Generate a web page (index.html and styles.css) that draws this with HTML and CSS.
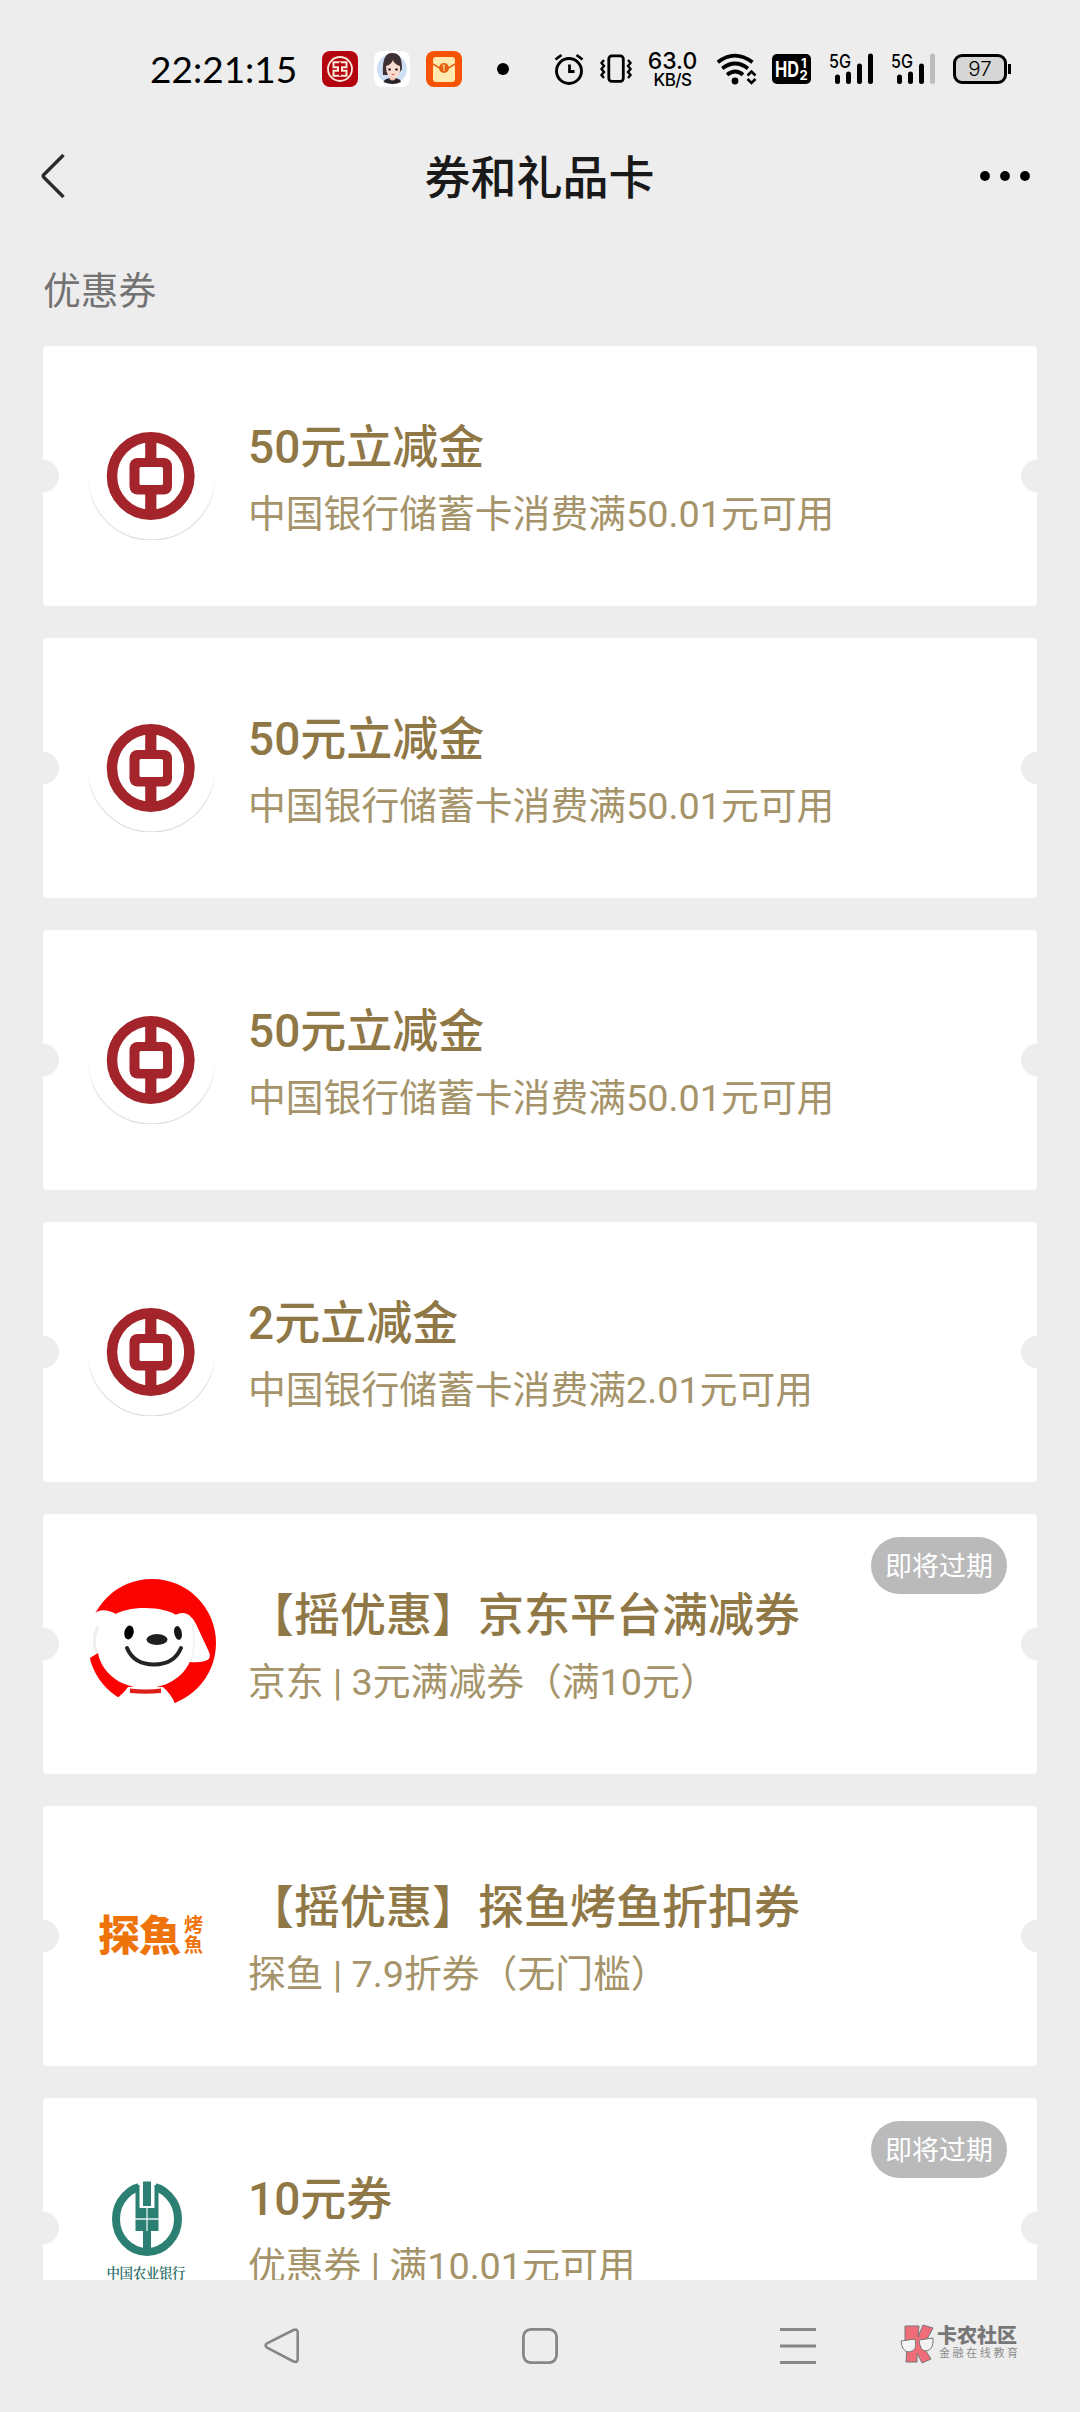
FILE: index.html
```html
<!DOCTYPE html>
<html lang="zh-CN">
<head>
<meta charset="utf-8">
<title>券和礼品卡</title>
<link rel="stylesheet" href="styles.css">
</head>
<body>
<svg class="defs" width="0" height="0">
  <linearGradient id="rim" x1="0" y1="0" x2="0" y2="1"><stop offset="0" stop-color="#fff"/><stop offset="0.500" stop-color="#e4e4e4"/><stop offset="1" stop-color="#d8d8d8"/></linearGradient>
  <symbol id="boc" viewBox="0 0 128 128">
    <path d="M0.500 66a63 62 0 0 0 126 0" fill="none" stroke="url(#rim)" stroke-width="1.200"/>
    <circle cx="62.700" cy="64" r="38.700" fill="none" stroke="#a3242a" stroke-width="10.500"/>
    <path d="M57.200 26h11.200v22H57.200zM57.200 80h11.200v22H57.200z" fill="#a3242a"/>
    <rect x="41.500" y="46" width="42.500" height="36.500" rx="8" fill="#a3242a"/>
    <rect x="51.500" y="55" width="23.500" height="18" rx="1.500" fill="#fff"/>
  </symbol>
</svg>
<div class="screen">
  <div class="status">
    <span class="time">22:21:15</span>
    <svg class="app" viewBox="0 0 36 36"><rect width="36" height="36" rx="8" fill="#b4040f"/><circle cx="18" cy="18" r="12" fill="none" stroke="#fbe9dc" stroke-width="1.800"/><path d="M11.500 11.200h13v5h-4.500v3.600h4.500v5h-13v-5H16v-3.600h-4.500z" fill="none" stroke="#fbe9dc" stroke-width="2"/><path d="M18 11v14" stroke="#b4040f" stroke-width="1.600"/></svg>
    <svg class="app" viewBox="0 0 36 36"><rect width="36" height="36" rx="8" fill="#fff"/><circle cx="18" cy="18" r="15" fill="#cfe0f6"/><path d="M9 24C8 9 11 2 18 2s10 4 10 16l-4 6z" fill="#3f3133"/><path d="M9.500 31q1-4 9-4t8.500 4q-8 4-17.500 0z" fill="#272329"/><path d="M15.500 24h6v4q-3 3-6 0z" fill="#f2c3b3"/><path d="M12 15q5-1 7-6 1 4 7 6 1 12-7 12-7-1-7-12z" fill="#fbdcd0"/><circle cx="15.500" cy="18.500" r="1.300" fill="#302529"/><circle cx="22.500" cy="18.500" r="1.300" fill="#302529"/><path d="M17.500 23.500h3" stroke="#cf6663" stroke-width="1.200"/></svg>
    <svg class="app" viewBox="0 0 36 36"><rect width="36" height="36" rx="8" fill="#f65305"/><rect x="7" y="6" width="22" height="25" rx="3" fill="#ffe9ae"/><path d="M7 13l8 5M29 13l-8 5" stroke="#e0681c" stroke-width="1.500"/><circle cx="18" cy="17" r="5" fill="#df6213"/><path d="M16.500 15l1.500-1v6" fill="none" stroke="#ffd48c" stroke-width="1.200"/></svg>
    <i class="more-dot"></i>
    <svg class="alarm" viewBox="0 0 30 32"><g fill="none" stroke="#000"><circle cx="15" cy="18" r="12.500" stroke-width="2.900"/><path d="M1.500 6.500l6-4.500M28.500 6.500l-6-4.500" stroke-width="2.800"/><path d="M15.500 11.500v7h5" stroke-width="2.800"/></g></svg>
    <svg class="vib" viewBox="0 0 32 30"><g fill="none" stroke="#000" stroke-width="2.800"><rect x="8.800" y="1.800" width="14.500" height="25.500" rx="3"/><path d="M4 6L1.500 9 4 12 1.500 15 4 18 1.500 21 4 24M28 6l2.500 3-2.500 3 2.500 3-2.500 3 2.500 3-2.500 3" stroke-width="2.400"/></g></svg>
    <span class="speed"><b>63.0</b><small>KB/S</small></span>
    <svg class="wifi" viewBox="0 0 42 32"><g fill="none" stroke="#000" stroke-width="3.800"><path d="M1.800 9.200Q18.500-4 36.500 9.200"/><path d="M6.300 15.400Q19 5.500 32 15.400"/><path d="M11 21.700q8.500-6.500 16 0"/><path d="M31.500 22.500l4-4 4 4M31.500 26l4 4 4-4" stroke-width="2.600"/></g><circle cx="19" cy="28" r="3.400"/></svg>
    <svg class="hd" viewBox="0 0 39 30"><rect width="39" height="30" rx="5"/><g fill="#fff" font-family="Inter, sans-serif" font-weight="700"><text x="3" y="22.500" font-size="21" textLength="24" lengthAdjust="spacingAndGlyphs">HD</text><text x="29" y="13.500" font-size="13">1</text><text x="27.500" y="26" font-size="13">2</text></g></svg>
    <svg class="signal" viewBox="0 0 46 32"><text x="0" y="14.500" font-family="Inter, sans-serif" font-weight="500" font-size="18.500" textLength="22" lengthAdjust="spacingAndGlyphs">5G</text><g stroke="#000" stroke-width="5" stroke-linecap="round"><path d="M8.500 24v4.500M19.500 21v7.500M30.500 13v15.500M41.500 3v25.500"/></g></svg>
    <svg class="signal second" viewBox="0 0 46 32"><text x="0" y="14.500" font-family="Inter, sans-serif" font-weight="500" font-size="18.500" textLength="22" lengthAdjust="spacingAndGlyphs">5G</text><g stroke="#000" stroke-width="5" stroke-linecap="round"><path d="M8.500 24v4.500M19.500 21v7.500M30.500 13v15.500"/><path d="M41.500 3v25.500" stroke="#bdbdbd"/></g></svg>
    <svg class="battery" viewBox="0 0 58 30"><rect x="1.500" y="1.500" width="51" height="27" rx="7.500" fill="#d6d6d6" stroke="#000" stroke-width="3"/><path d="M56.500 10v10" stroke="#000" stroke-width="3"/><text x="27" y="22" text-anchor="middle" font-family="Inter, sans-serif" font-weight="300" font-size="20" textLength="23.500" lengthAdjust="spacingAndGlyphs">97</text></svg>
  </div>

  <header class="bar">
    <svg class="back" viewBox="0 0 26 46"><path d="M23.500 2L4 21.500q-1.500 1.500 0 3L23.500 44" fill="none" stroke="#2b2b2b" stroke-width="3.400"/></svg>
    <h1>券和礼品卡</h1>
    <svg class="dots" viewBox="0 0 50 12"><circle cx="5" cy="6" r="4.900"/><circle cx="25" cy="6" r="4.900"/><circle cx="45" cy="6" r="4.900"/></svg>
  </header>

  <main class="list">
    <h2>优惠券</h2>
    <article class="card"><svg class="logo"><use href="#boc"/></svg><div class="info"><h3>50元立减金</h3><p>中国银行储蓄卡消费满50.01元可用</p></div></article>
    <article class="card"><svg class="logo"><use href="#boc"/></svg><div class="info"><h3>50元立减金</h3><p>中国银行储蓄卡消费满50.01元可用</p></div></article>
    <article class="card"><svg class="logo"><use href="#boc"/></svg><div class="info"><h3>50元立减金</h3><p>中国银行储蓄卡消费满50.01元可用</p></div></article>
    <article class="card"><svg class="logo"><use href="#boc"/></svg><div class="info"><h3>2元立减金</h3><p>中国银行储蓄卡消费满2.01元可用</p></div></article>
    <article class="card">
      <svg class="logo" viewBox="0 0 128 128">
        <circle cx="64" cy="63" r="64" fill="#fb0300"/>
        <path d="M28 34Q13 26 5 35L-3 40v41l13-8z" fill="#fff"/>
        <path d="M10 46q-7 14-1 27" fill="none" stroke="#eee" stroke-width="3"/>
        <path d="M84 37q10-7 17-2 4 3 7 9l13 28q3 7-4 9-6 2-16 1z" fill="#fff"/>
        <path d="M40 107q-4 6-12 12v11h61l-2-6q-3-9-12-17z" fill="#fff"/>
        <path d="M57 28c27 0 43 11 47 26 7 31-16 54-47 54S5 84 10 58c4-20 20-30 47-30z" fill="#fff"/>
        <path d="M104 45q5 17-1 36" fill="none" stroke="#f1f1f1" stroke-width="1.500"/>
        <path d="M42 108.500q16 2 31 0v4.500q-16 1.500-31 0z" fill="#dc2019"/>
        <ellipse cx="41" cy="52.500" rx="4.600" ry="7" transform="rotate(12 41 52.500)"/><ellipse cx="90" cy="53" rx="3.800" ry="7" transform="rotate(-12 90 53)" fill="#171717"/>
        <ellipse cx="69" cy="59.500" rx="10.500" ry="5.400" fill="#1f1f1f"/>
        <path d="M39 68q7 16.500 27 16.500T93 68" fill="none" stroke="#242424" stroke-width="4" stroke-linecap="round"/>
      </svg>
      <div class="info"><h3>【摇优惠】京东平台满减券</h3><p>京东 | 3元满减券（满10元）</p></div>
      <span class="badge">即将过期</span>
    </article>
    <article class="card">
      <div class="logo fish"><strong>探魚</strong><span>烤<br>魚</span></div>
      <div class="info"><h3>【摇优惠】探鱼烤鱼折扣券</h3><p>探鱼 | 7.9折券（无门槛）</p></div>
    </article>
    <article class="card">
      <svg class="logo" viewBox="0 0 128 128">
        <ellipse cx="59" cy="55" rx="31" ry="33" fill="none" stroke="#2b8073" stroke-width="8"/>
        <path d="M50 15h18v30H50z" fill="#fff"/>
        <path d="M55 17.500h8V42h-8z" fill="#2b8073"/>
        <path d="M47.500 21h4v23h15V21h4v46h-23z" fill="#2b8073"/>
        <path d="M55 67h8v22h-8z" fill="#2b8073"/>
        <path d="M47 55h24M59 43v24" stroke="#e6f2ef" stroke-width="1.300"/>
        <text class="abc-name" x="18.500" y="114" textLength="79" fill="#2b6f68">中国农业银行</text>
      </svg>
      <div class="info"><h3>10元券</h3><p>优惠券 | 满10.01元可用</p></div>
      <span class="badge">即将过期</span>
    </article>
  </main>

  <nav class="nav">
    <svg class="triangle" viewBox="0 0 36 36"><path d="M29.500 2L3.500 15.200q-4 2.300 0 4.600l26 13.700q4.200 1.500 4.200-2.800V4.500Q33.700.5 29.500 2z" fill="none" stroke="#868686" stroke-width="2.600"/></svg>
    <svg viewBox="0 0 36 36"><rect x="1.400" y="1.400" width="33.200" height="33.200" rx="7.500" fill="none" stroke="#868686" stroke-width="2.800"/></svg>
    <svg viewBox="0 0 36 36"><path d="M0 1.500h36M0 18h36M0 34.500h36" stroke="#868686" stroke-width="3"/></svg>
  </nav>

  <div class="mark">
    <svg viewBox="0 0 34 40"><g stroke="#777" stroke-width="1" stroke-linejoin="round"><path d="M5 3h14l-1 11 5-12 10 3-7 13-4 4 9 14-9 4-5-10v9H6l1-15-2-6z" fill="#ef6c79"/><path d="M1 18l14-2q3 12-6 13-7 0-8-11zM19 17l14-2q1 12-7 13-6 0-7-11z" fill="#f3f3f3"/></g></svg>
    <div><b>卡农社区</b><small>金融在线教育</small></div>
  </div>
</div>
</body>
</html>
```
FILE: styles.css
```css
* { box-sizing: border-box; margin: 0; padding: 0; }
body {
  background: #ededed;
  font-family: Roboto, "Noto Sans CJK SC", sans-serif;
}
.defs { display: block; }
svg { flex: none; overflow: visible; }
.screen {
  position: relative;
  display: flex;
  flex-direction: column;
  width: 1080px;
  height: 2412px;
  overflow: hidden;
}

.status { flex: none; display: flex; align-items: center; height: 138px; padding-left: 150px; }
.time { width: 172px; font: 37px/46px Lato, sans-serif; white-space: nowrap; }
.app { width: 36px; height: 36px; margin-right: 16px; }
.more-dot { width: 12px; height: 12px; margin-left: 19px; border-radius: 50%; background: #000; }
.alarm { width: 30px; height: 32px; margin-left: 45px; }
.vib { width: 32px; height: 30px; margin-left: 16px; }
.speed {
  display: flex; flex-direction: column; align-items: center;
  width: 49px; margin-left: 16px;
  font-family: Inter, sans-serif;
}
.speed b { padding-top: 2px; font-size: 23px; line-height: 20px; font-weight: 500; }
.speed small { font-size: 17px; line-height: 18px; font-weight: 500; letter-spacing: -0.500px; }
.wifi { width: 42px; height: 32px; margin-left: 19px; }
.hd { width: 39px; height: 30px; margin-left: 14px; }
.signal { width: 46px; height: 32px; margin-left: 18px; }
.signal.second { margin-left: 16px; }
.battery { width: 58px; height: 30px; margin-left: 16px; }

.bar {
  flex: none; display: flex; align-items: center; justify-content: space-between;
  height: 76px; padding: 0 50px 0 40px;
}
.bar h1 { padding: 4px 0 0 9px; font-size: 46px; line-height: 66px; font-weight: 500; color: #191919; }
.back { width: 26px; height: 46px; margin-right: 24px; }
.dots { width: 50px; height: 12px; }

.list { flex: none; height: 2066px; padding: 0 43px; overflow: hidden; }
.list h2 { height: 132px; padding-top: 48px; font-size: 37.800px; line-height: 58px; font-weight: 400; color: #737373; }
.card {
  position: relative;
  display: flex; align-items: center;
  height: 260px; margin-bottom: 32px; padding-left: 45px;
  border-radius: 4px;
  background:
    radial-gradient(circle at 0 50%, #ededed 15.500px, transparent 16.500px),
    radial-gradient(circle at 100% 50%, #ededed 15.500px, transparent 16.500px),
    #fff;
}
.logo { flex: none; width: 128px; height: 128px; }
.info { margin-left: 32px; padding-top: 8px; white-space: nowrap; }
.info h3 { font-size: 46px; line-height: 68px; font-weight: 500; color: #8f7846; }
.info p { font-size: 37.800px; line-height: 66px; font-weight: 400; color: #a59369; }
.badge {
  position: absolute; top: 23px; right: 30px;
  width: 136px; height: 57px; padding-top: 2px; border-radius: 29px;
  background: #bababa; color: #fff;
  font-size: 27px; line-height: 57px; text-align: center;
}
.fish { display: flex; align-items: center; padding-left: 10px; color: #ee730a; font-weight: 900; }
.fish strong { padding-top: 2px; font-size: 42px; line-height: 44px; font-weight: 900; letter-spacing: -1px; }
.fish span { margin-left: 4px; font-size: 19px; line-height: 20px; font-weight: 700; }
.abc-name { font: 600 13.500px "Noto Serif CJK SC", "Noto Sans CJK SC", serif; }

.nav {
  flex: none; display: grid; grid-template-columns: repeat(3, 258px);
  justify-content: center; align-items: center; justify-items: center;
  height: 132px;
}
.nav svg { width: 36px; height: 36px; }

.mark { position: absolute; left: 900px; top: 2323px; display: flex; align-items: flex-start; gap: 3px; }
.mark svg { width: 34px; height: 40px; }
.mark div { display: flex; flex-direction: column; white-space: nowrap; }
.mark b { padding-top: 2px; font-size: 20px; line-height: 23px; font-weight: 900; color: #777; }
.mark small { margin-left: 2px; font-size: 11px; line-height: 11px; letter-spacing: 2.600px; color: #8c8c8c; }
```
